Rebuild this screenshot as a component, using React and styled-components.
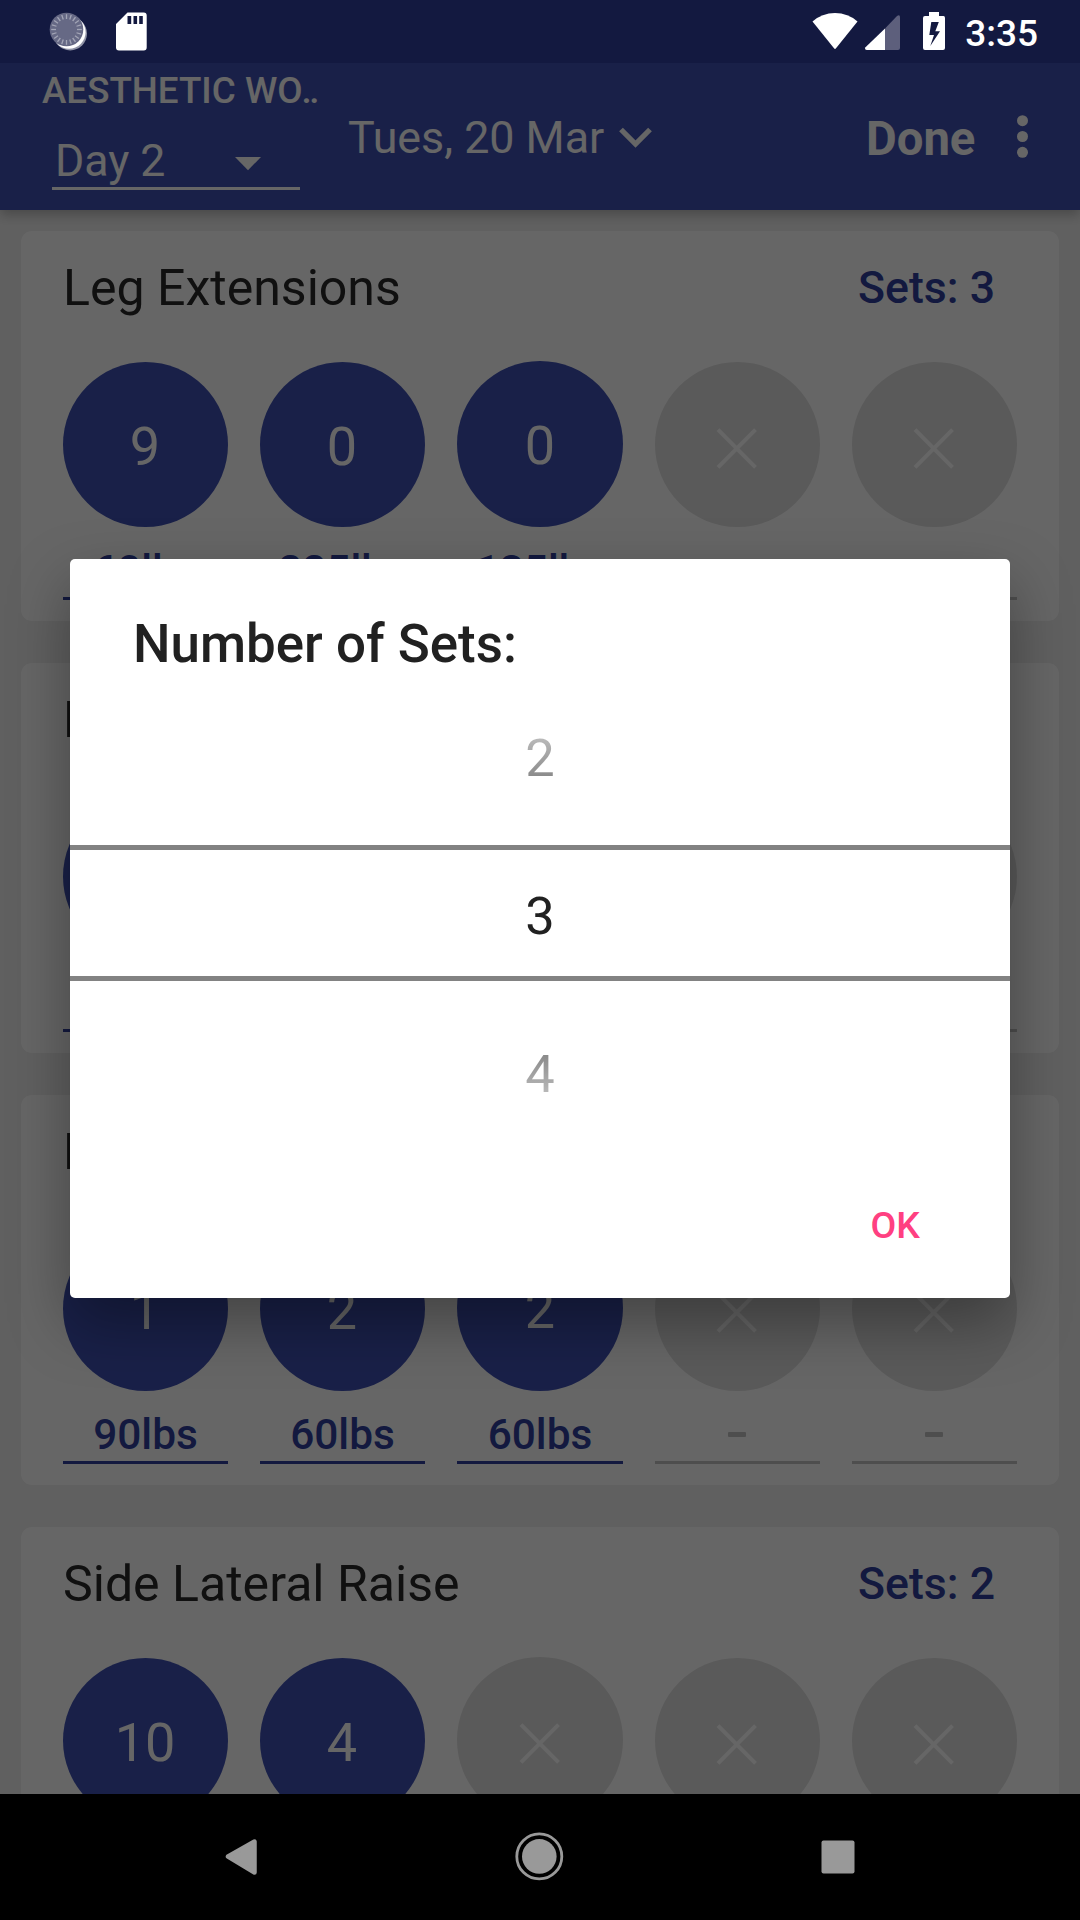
import React from 'react';
import styled, { createGlobalStyle, css } from 'styled-components';

const GlobalStyle = createGlobalStyle`
  * { box-sizing: border-box; }
  body { margin: 0; background: #000; font-family: Roboto, "Liberation Sans", sans-serif; }
`;

const Screen = styled.div`
  width: 1080px;
  height: 1920px;
  display: flex;
  flex-direction: column;
  overflow: hidden;
  background: #000;
`;

const StatusBar = styled.header`
  height: 63px;
  flex: none;
  display: flex;
  align-items: flex-start;
  justify-content: space-between;
  padding: 0 42px 0 48px;
  background: #131940;
`;

const StatusGroup = styled.div`
  display: flex;
  height: 63px;
`;

const Clock = styled.time`
  font-size: 37px;
  font-weight: 500;
  line-height: 68px;
  color: #fff;
  padding-left: 19px;
`;

const Window = styled.div`
  position: relative;
  flex: 1;
  min-height: 0;
  display: flex;
  flex-direction: column;
  overflow: hidden;
`;

const AppBar = styled.div`
  height: 147px;
  flex: none;
  display: flex;
  z-index: 1;
  background: #3f51b5;
  color: #fff;
  box-shadow: 0 5px 11px rgba(0, 0, 0, 0.24);
`;

const Program = styled.div`
  width: 348px;
  padding-left: 42px;
`;

const ProgramName = styled.div`
  font-size: 36.75px;
  font-weight: 500;
  line-height: 55px;
  height: 65px;
  white-space: nowrap;
`;

const Ellipsis = styled.span`
  margin-left: -1px;
  letter-spacing: -2.5px;
`;

const DayPicker = styled.div`
  width: 248px;
  height: 62px;
  margin-left: 10px;
  padding: 0 39px 0 3px;
  display: flex;
  align-items: flex-start;
  justify-content: space-between;
  border-bottom: 3px solid #fff;
  font-size: 44.6px;
  line-height: 66px;
`;

const DateButton = styled.div`
  display: flex;
  width: 520px;
  font-size: 44.8px;
  line-height: 150px;
  gap: 14px;
`;

const Done = styled.div`
  width: 111px;
  font-size: 47.25px;
  font-weight: 700;
  line-height: 152px;
  margin-left: -2px;
`;

const List = styled.main`
  flex: 1;
  min-height: 0;
  display: flex;
  flex-direction: column;
  gap: 42px;
  padding: 21px 21px 0;
  background: #f0f0f0;
  overflow: hidden;
`;

const Card = styled.section`
  height: 390px;
  flex: none;
  border-radius: 11px;
  background: #fff;
  padding: 0 42px;
`;

const CardHead = styled.div`
  height: 131px;
  display: flex;
  justify-content: space-between;
  padding-right: 22px;
`;

const Title = styled.h2`
  margin: 0;
  font-size: 50.05px;
  font-weight: 400;
  line-height: 114px;
  color: #2a2a2a;
`;

const SetCount = styled.div`
  font-size: 44.6px;
  font-weight: 500;
  line-height: 114px;
  color: #303f9f;
`;

const Sets = styled.div`
  display: grid;
  grid-template-columns: 165px 165px 166px 165px 165px;
  column-gap: 32px;
  align-items: end;
`;

const SetCell = styled.div`
  display: flex;
  flex-direction: column;
`;

const Reps = styled.div`
  height: 165px;
  padding-right: 1px;
  border-radius: 50%;
  display: flex;
  justify-content: center;
  font-size: 54px;
  line-height: 170px;
  color: #fff;
  background: ${(p) => (p.$empty ? '#e1e1e1' : '#3f51b5')};
  ${(p) => p.$tall && css`height: 166px; margin-top: -1px; padding-right: 0; line-height: 169px;`}
`;

const Weight = styled.div`
  height: 73px;
  border-bottom: 3px solid ${(p) => (p.$empty ? '#c4c4c4' : '#303f9f')};
  text-align: center;
  font-size: 42.4px;
  font-weight: 500;
  line-height: 87px;
  color: ${(p) => (p.$empty ? '#c4c4c4' : '#303f9f')};
`;

const Dash = styled.span`
  display: block;
  width: 18px;
  height: 5px;
  margin: 41px 0 0 73px;
  border-radius: 1px;
  background: currentColor;
`;

const Scrim = styled.div`
  position: absolute;
  inset: 0;
  z-index: 2;
  background: rgba(0, 0, 0, 0.6);
  display: flex;
  justify-content: center;
  align-items: flex-start;
  padding-top: 496px;
`;

const Dialog = styled.div`
  width: 940px;
  height: 739px;
  border-radius: 5px;
  background: #fff;
  box-shadow: 0 25px 60px rgba(0, 0, 0, 0.34);
  display: flex;
  flex-direction: column;
`;

const DialogTitle = styled.h1`
  margin: 0;
  height: 118px;
  padding-left: 63px;
  font-size: 52.9px;
  font-weight: 500;
  line-height: 171px;
  color: #212121;
`;

const Wheel = styled.div`
  display: flex;
  flex-direction: column;
  text-align: center;
  font-size: 52.5px;
`;

const Choice = styled.div`
  height: ${(p) => p.$height}px;
  line-height: ${(p) => p.$line}px;
  color: transparent;
  background: linear-gradient(${(p) => p.$fade}) text;
`;

const Current = styled.div`
  height: 136px;
  border: solid #828282;
  border-width: 5px 0;
  line-height: 132px;
  color: #212121;
`;

const Actions = styled.div`
  display: flex;
  justify-content: flex-end;
  padding-right: 90px;
`;

const Action = styled.button`
  border: 0;
  padding: 0;
  background: none;
  font: 500 37.4px/75px Roboto, "Liberation Sans", sans-serif;
  color: #ff4081;
  height: 75px;
`;

const NavBar = styled.nav`
  height: 126px;
  flex: none;
  display: flex;
  background: #000;
`;

const Icon = styled.svg`
  display: block;
  flex: none;
`;

const exercises = [
  { name: 'Leg Extensions', count: 3, sets: [['9', '60lbs'], ['0', '225lbs'], ['0', '135lbs'], null, null] },
  { name: 'Leg Curls', count: 2, sets: [['0', '60lbs'], ['0', '60lbs'], null, null, null] },
  { name: 'Leg Press', count: 3, sets: [['1', '90lbs'], ['2', '60lbs'], ['2', '60lbs'], null, null] },
  { name: 'Side Lateral Raise', count: 2, sets: [['10', ''], ['4', ''], null, null, null] },
];

function Cross() {
  return (
    <Icon width="48" height="165" viewBox="0 0 48 165">
      <path d="M5 67.700L42.500 105.300M42.500 67.700L5 105.300" stroke="#fff" strokeWidth="4" />
    </Icon>
  );
}

function Exercise({ name, count, sets }) {
  return (
    <Card>
      <CardHead>
        <Title>{name}</Title>
        <SetCount>Sets: {count}</SetCount>
      </CardHead>
      <Sets>
        {sets.map((s, i) => (
          <SetCell key={i}>
            <Reps $empty={!s} $tall={i === 2}>{s ? s[0] : <Cross />}</Reps>
            <Weight $empty={!s}>{s ? s[1] : <DashMark />}</Weight>
          </SetCell>
        ))}
      </Sets>
    </Card>
  );
}

const DashBox = styled.div`
  display: flex;
`;

function DashMark() {
  return (
    <DashBox>
      <Dash />
    </DashBox>
  );
}

const ticks = Array.from({ length: 20 }, (_, i) => i * 18);

export default function App() {
  return (
    <Screen>
      <GlobalStyle />
      <StatusBar>
        <StatusGroup>
          <Icon width="68" height="63" viewBox="48 0 68 63">
            <circle cx="70.2" cy="33.6" r="16.8" fill="#9093a6" />
            <circle cx="69" cy="32.2" r="16.6" fill="#fff" />
            <circle cx="66.5" cy="29.5" r="16.8" fill="#666985" />
            {ticks.map((a) => (
              <path key={a} d="M66.5 14.2v4.8" stroke="#a3a5b6" strokeWidth="1.3" transform={`rotate(${a} 66.5 29.5)`} />
            ))}
          </Icon>
          <Icon width="34" height="63" viewBox="116 0 34 63">
            <path fillRule="evenodd" fill="#fff" d="M127.5 12.5H143.7a3 3 0 0 1 3 3V47.500a3 3 0 0 1-3 3H119a3 3 0 0 1-3-3V24ZM127.500 16v8h3.700v-8ZM133.500 16v8h3.600v-8ZM139.200 16v8h3.600v-8Z" />
          </Icon>
        </StatusGroup>
        <StatusGroup>
          <Icon width="134" height="63" viewBox="812 0 134 63">
            <path d="M812.5 21.500Q822 13 835 13T857.500 21.500L836 48.300q-1 1.200-2 0Z" fill="#fff" />
            <path d="M885 28.500L897 16q3-2 3 1.500V48q0 2-2 2H885Z" fill="#5d5f7c" />
            <path d="M885 28.500V50H867q-3-.5-1.500-2.800Z" fill="#fff" />
            <path fillRule="evenodd" fill="#fff" d="M929 12H939V16H943.500Q945 16 945 18V48Q945 50 943 50H925Q923 50 923 48V18Q923 16 925 16H929ZM931.300 22L929.300 35H934L930.300 46L940 31.300H935.300L938.800 22Z" />
          </Icon>
          <Clock>3:35</Clock>
        </StatusGroup>
      </StatusBar>
      <Window>
        <AppBar>
          <Program>
            <ProgramName>AESTHETIC WO<Ellipsis>..</Ellipsis></ProgramName>
            <DayPicker>
              Day 2
              <Icon width="26" height="59" viewBox="0 0 26 59">
                <path d="M0 29H26L13 42.300Z" fill="#fff" />
              </Icon>
            </DayPicker>
          </Program>
          <DateButton>
            Tues, 20 Mar
            <Icon width="34" height="147" viewBox="0 0 34 147">
              <path d="M3 66.500L17.500 81L32 66.500" fill="none" stroke="#fff" strokeWidth="5.300" />
            </Icon>
          </DateButton>
          <Done>Done</Done>
          <Icon width="100" height="147" viewBox="977 63 100 147">
            <g fill="#fff">
              <circle cx="1022.500" cy="120.700" r="5.500" />
              <circle cx="1022.500" cy="136.500" r="5.500" />
              <circle cx="1022.500" cy="152.300" r="5.500" />
            </g>
          </Icon>
        </AppBar>
        <List>
          {exercises.map((e) => <Exercise key={e.name} {...e} />)}
        </List>
        <Scrim>
          <Dialog>
            <DialogTitle>Number of Sets:</DialogTitle>
            <Wheel>
              <Choice $height={168} $line={162} $fade="#fff 0, #bbb 60px, #888 102px, #777">2</Choice>
              <Current>3</Current>
              <Choice $height={207} $line={187} $fade="#777, #888 72px, #bbb 114px, #fff">4</Choice>
            </Wheel>
            <Actions><Action>OK</Action></Actions>
          </Dialog>
        </Scrim>
      </Window>
      <NavBar>
        <Icon width="1080" height="126" viewBox="0 1794 1080 126">
          <g fill="#999">
            <path d="M228 1856.500L254.500 1841.500V1872.500Z" stroke="#999" strokeWidth="4.500" strokeLinejoin="round" />
            <circle cx="539.300" cy="1856.400" r="17.300" />
            <circle cx="539.300" cy="1856.400" r="22.500" fill="none" stroke="#999" strokeWidth="2.800" />
            <rect x="821.500" y="1840.500" width="33" height="33" rx="2" />
          </g>
        </Icon>
      </NavBar>
    </Screen>
  );
}
